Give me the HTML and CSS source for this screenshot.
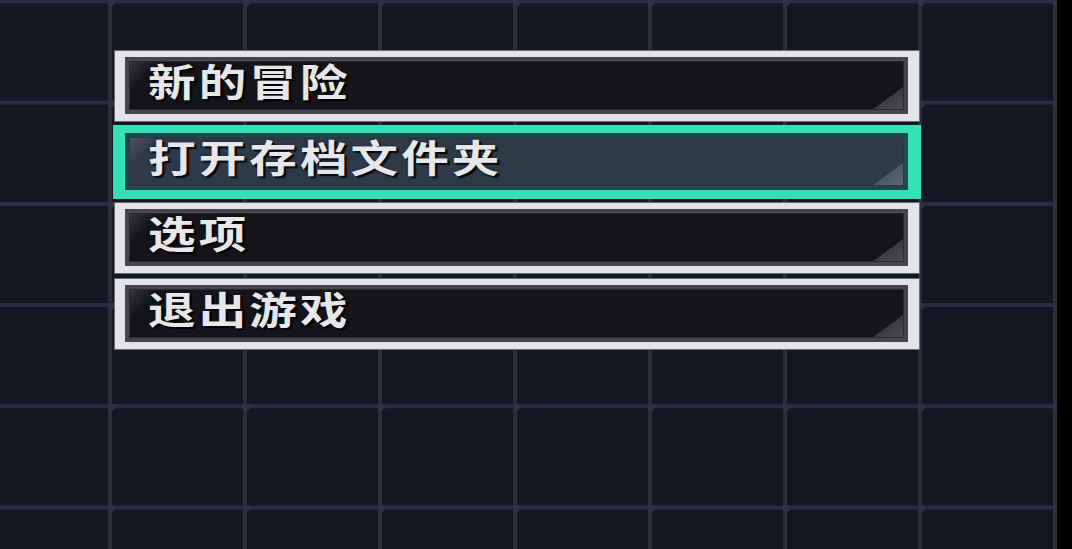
FILE: index.html
```html
<!DOCTYPE html>
<html lang="zh-CN">
<head>
<meta charset="utf-8">
<title>菜单</title>
<link rel="stylesheet" href="styles.css">
</head>
<body>
<div class="stage">
  <nav class="menu">
    <div class="btn"><div class="btn-inner"><span class="label">新的冒险</span></div></div>
    <div class="btn btn-selected"><div class="btn-inner"><span class="label">打开存档文件夹</span></div></div>
    <div class="btn"><div class="btn-inner"><span class="label">选项</span></div></div>
    <div class="btn"><div class="btn-inner"><span class="label">退出游戏</span></div></div>
  </nav>
</div>
</body>
</html>
```

FILE: styles.css
```css
html, body {
  margin: 0;
  padding: 0;
  background: #000;
  width: 1072px;
  height: 549px;
  overflow: hidden;
}

.stage {
  width: 1057px;
  height: 549px;
  box-sizing: border-box;
  padding: 51px 0 0 115px;
  background-color: #121722;
  background-image:
    radial-gradient(circle at 2px 2px, #303343 0, #303343 4.5px, transparent 5.5px),
    linear-gradient(to right, #2a2d3b 0, #2a2d3b 4px, transparent 4px),
    linear-gradient(to bottom, #2a2d3b 0, #2a2d3b 4px, transparent 4px);
  background-size: 135px 101.2px, 135px 101.2px, 135px 101.2px;
  background-position: 108px -0.5px, 108px -0.5px, 108px -0.5px;
}

.menu {
  width: 804px;
  display: flex;
  flex-direction: column;
  gap: 6px;
}

.btn {
  height: 70px;
  box-sizing: border-box;
  padding: 6px 11px 7px 10px;
  background: #e3e3e7;
  box-shadow: 0 0 0 1px #6a6a70;
  display: flex;
}

.btn-inner {
  flex: 1;
  display: flex;
  align-items: center;
  box-sizing: border-box;
  padding: 0 0 11px 19px;
  border: 4px solid #45454b;
  box-shadow: inset 0 0 0 1px #2a2a2e;
  background-color: #151419;
  background-image:
    linear-gradient(to top left, #4a4a50 0, #3a3a40 50%, transparent 50%),
    linear-gradient(135deg, rgba(255,255,255,0.16) 0, rgba(255,255,255,0) 22px);
  background-size: 31px 23px, 100% 100%;
  background-position: right 1px bottom 0, 0 0;
  background-repeat: no-repeat;
}

.btn-selected {
  background: #35dfb8;
  box-shadow: 0 0 0 2px #35dfb8;
  position: relative;
  z-index: 1;
}

.btn-selected .btn-inner {
  border-color: #1e4a4c;
  box-shadow: inset 0 0 0 1px #253544;
  background-color: #2e3a48;
  background-image:
    linear-gradient(to top left, #5c6772 0, #4e5966 50%, transparent 50%),
    linear-gradient(135deg, rgba(255,255,255,0.16) 0, rgba(255,255,255,0) 22px);
}

.label {
  display: inline-block;
  font-family: "Noto Sans CJK SC", "Noto Sans", sans-serif;
  font-weight: 700;
  font-size: 38px;
  line-height: 1;
  letter-spacing: 2.5px;
  color: #e7e7e9;
  transform: scaleX(1.25);
  transform-origin: left center;
  text-shadow: 2px 2px 1px rgba(0,0,0,0.85), 0 0 2px rgba(0,0,0,0.6);
}
```
